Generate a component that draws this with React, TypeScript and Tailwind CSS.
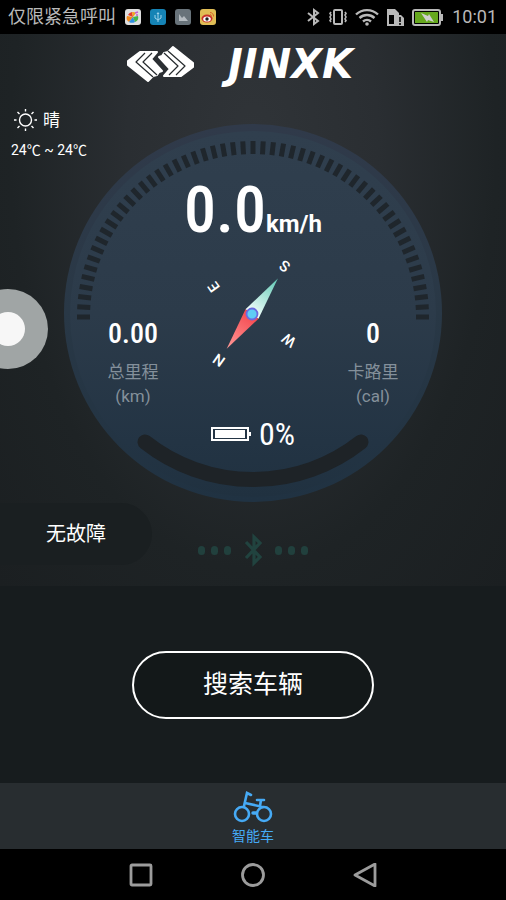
import type { ReactNode } from 'react';

const TICKS = Array.from({ length: 55 }, (_, i) => -90 + (i * 180) / 54);

function StatusBar() {
  return (
    <header className="flex h-[34px] items-center justify-between bg-black pl-2 pr-[9px] text-[#b9b9b9]">
      <div className="flex items-center gap-[9px]">
        <span className="text-lg leading-6">仅限紧急呼叫</span>
        <svg width="16" height="16" viewBox="0 0 16 16" aria-hidden="true">
          <rect width="16" height="16" rx="3" fill="#dedede" />
          <path d="M8 8 3 6a5 5 0 0 1 4-3z" fill="#e23c2e" />
          <path d="M8 8 7 3a5 5 0 0 1 4 1z" fill="#f2a51e" />
          <path d="M8 8 2 7a5 5 0 0 0 2 6z" fill="#f08a1c" />
          <path d="M8 8l-4 5a6 6 0 0 0 6 0z" fill="#2f8fe0" />
          <path d="m8 8 2 5a5 5 0 0 0 3-6z" fill="#43b649" />
          <path d="m10 4 3-1m-2 3 2 0" stroke="#c45bd0" strokeWidth="1.5" />
        </svg>
        <svg width="16" height="16" viewBox="0 0 16 16" aria-hidden="true">
          <rect width="16" height="16" rx="3" fill="#1583b5" />
          <path d="M8 13V4M5 6v3l3 2 3-2V6" fill="none" stroke="#9fd3ea" />
          <path d="m6.500 5 1.500-2 1.500 2z" fill="#9fd3ea" />
        </svg>
        <svg width="16" height="16" viewBox="0 0 16 16" aria-hidden="true">
          <rect width="16" height="16" rx="3" fill="#68737a" />
          <path d="M4 12V5l3 4 2-2 4 5z" fill="#b4bbc0" />
        </svg>
        <svg width="16" height="16" viewBox="0 0 16 16" aria-hidden="true">
          <rect width="16" height="16" rx="3" fill="#e0bd55" />
          <ellipse cx="7" cy="9.500" rx="5.500" ry="4" fill="#c8322b" />
          <ellipse cx="7" cy="10" rx="3.800" ry="2.600" fill="#fff" />
          <circle cx="7" cy="10" r="1.700" fill="#222" />
          <path d="M10 3.500a3.500 3.500 0 0 1 3.500 4M10 5.500a2 2 0 0 1 1.500 2" fill="none" stroke="#d9622b" />
        </svg>
      </div>
      <div className="flex items-center gap-2">
        <svg width="14" height="18" viewBox="0 0 14 18" fill="none" stroke="currentColor" strokeWidth="2" aria-hidden="true">
          <path d="m1 5 10 8-4 3V2l4 3-10 8" />
        </svg>
        <svg width="18" height="18" viewBox="0 0 18 18" fill="none" stroke="currentColor" strokeWidth="1.600" aria-hidden="true">
          <rect x="5" y="2" width="8" height="14" rx="1" strokeWidth="2" />
          <path d="M2 4 1 5.500 2 7 1 9l1 2-1 1.500L2 14M16 4l1 1.500L16 7l1 2-1 2 1 1.500-1 1.500" />
        </svg>
        <svg width="24" height="18" viewBox="0 0 24 18" fill="none" stroke="currentColor" strokeWidth="2.400" aria-hidden="true">
          <path d="M1 6.500a16 16 0 0 1 22 0M4.500 10a11 11 0 0 1 15 0M8 13.500a6 6 0 0 1 8 0" />
          <circle cx="12" cy="16" r="1.800" fill="currentColor" stroke="none" />
        </svg>
        <svg width="17" height="17" viewBox="0 0 17 17" aria-hidden="true">
          <path d="M0 0h8l4 4v3H8v10H0z" fill="currentColor" />
          <path d="M2 6h5v9H2z" fill="#000" />
          <path d="M8 6h6l3 3v8H8z" fill="currentColor" />
          <path d="M13 8v5M13 14v2" stroke="#000" strokeWidth="1.600" />
        </svg>
        <svg width="32" height="17" viewBox="0 0 32 17" aria-hidden="true">
          <rect x="1" y="1" width="27" height="15" rx="2" fill="none" stroke="currentColor" strokeWidth="2" />
          <rect x="3" y="3" width="23" height="11" fill="#66a81e" />
          <path d="M29 5h2v7h-2z" fill="currentColor" />
          <path d="m9 4 7 3 1-2 5 8-6-2-1 2z" fill="#d0d0d0" />
        </svg>
        <time className="text-lg leading-6">10:01</time>
      </div>
    </header>
  );
}

function Brand() {
  return (
    <div className="flex h-14 items-center justify-center gap-2 pt-1 text-white">
      <svg width="67" height="38" viewBox="0 0 67 38" strokeLinejoin="round" aria-hidden="true">
        <g fill="#fff" stroke="#fff" strokeWidth="2">
          <path d="M13 7h17l-6 7 11 12-3 1-2 3-4 1-5 5L1 20v-4z" />
          <path d="M54 31H37l6-7-11-12 3-1 2-3 4-1 5-5 20 16v4z" />
        </g>
        <g fill="none" stroke="#262b2e" strokeWidth="1.200">
          <path d="m18 8-9 9 17 15M25 8l-9 9 14 13" />
          <path d="m49 30 9-9L41 6M42 30l9-9L37 8" />
        </g>
      </svg>
      <h1 className="min-w-[178px] text-center font-['DejaVu_Sans'] text-[40px] leading-10 font-bold italic">JINXK</h1>
    </div>
  );
}

function Weather() {
  return (
    <div className="z-10 col-start-1 row-start-1 self-start justify-self-start pt-[18px] pl-[11px] text-white">
      <div className="flex items-center gap-[6px] pl-[3px] text-[17px] leading-6">
        <svg width="23" height="24" viewBox="0 0 23 24" fill="none" stroke="currentColor" strokeWidth="1.400" aria-hidden="true">
          <circle cx="11.500" cy="12" r="6" />
          <path d="M11.500 1v2.500M11.500 20.500V23M0 12h2.500M20.500 12H23M3.500 4l2 2M17.500 18l2 2M3.500 20l2-2M17.500 6l2-2" />
        </svg>
        <span>晴</span>
      </div>
      <p className="mt-[6px] text-sm leading-6">24℃ ~ 24℃</p>
    </div>
  );
}

function Stat({ value, label, unit }: { value: string; label: string; unit: string }) {
  return (
    <dl className="flex flex-col items-center pt-[67px] text-center">
      <dt className="order-2 mt-[10px] text-[17px] leading-6 text-[#84909b]">
        {label}
        <br />
        {unit}
      </dt>
      <dd className="font-['Roboto_Condensed',Roboto,sans-serif] text-[28px] leading-8 font-medium text-white">{value}</dd>
    </dl>
  );
}

function Compass() {
  return (
    <svg width="120" height="126" viewBox="-60 -63 120 126" className="justify-self-center" role="img" aria-label="Compass">
      <defs>
        <linearGradient id="south" x1="0" y1="0" x2="0" y2="1">
          <stop offset="0" stopColor="#5fc8b4" />
          <stop offset="1" stopColor="#f4fffc" />
        </linearGradient>
        <linearGradient id="north" x1="0" y1="0" x2="0" y2="1">
          <stop offset="0" stopColor="#f5484f" />
          <stop offset="1" stopColor="#ff9a98" />
        </linearGradient>
      </defs>
      <g transform="translate(-1 0) rotate(36)">
        <path d="M0-44 8 0H-8z" fill="url(#south)" />
        <path d="M-8 0H8L0 43z" fill="url(#north)" />
      </g>
      <circle cx="-1" cy="0" r="5.500" fill="#5fcdf5" stroke="#6a6be0" strokeWidth="1.800" />
      <g transform="translate(-1 0)" fill="#fff" fontSize="15" fontWeight="500" textAnchor="middle">
        <text transform="translate(-33 46) rotate(215)" y="5">N</text>
        <text transform="translate(-38 -27) rotate(235)" y="5">E</text>
        <text transform="translate(33 -48) rotate(215)" y="5">S</text>
        <text transform="translate(37 26) rotate(215)" y="5">W</text>
      </g>
    </svg>
  );
}

function Dial() {
  return (
    <div className="col-start-1 row-start-1 mt-[33px] grid w-[380px] justify-self-center">
      <svg viewBox="0 0 380 380" className="col-start-1 row-start-1 w-full" aria-hidden="true">
        <defs>
          <linearGradient id="face" x1="0" y1="0" x2="0" y2="1">
            <stop offset="0" stopColor="#303f4e" />
            <stop offset="0.500" stopColor="#2c3b4a" />
            <stop offset="0.850" stopColor="#233444" />
            <stop offset="1" stopColor="#203140" />
          </linearGradient>
          <linearGradient id="rim" x1="0" y1="0" x2="0" y2="1">
            <stop offset="0" stopColor="#303a4a" />
            <stop offset="0.500" stopColor="#293846" />
            <stop offset="1" stopColor="#203242" />
          </linearGradient>
        </defs>
        <circle cx="190" cy="190" r="189" fill="url(#rim)" />
        <circle cx="190" cy="191" r="183" fill="url(#face)" />
        {TICKS.map((angle) => (
          <rect key={angle} x="187.500" y="18" width="5" height="13" fill="#1f262c" transform={`rotate(${angle} 190 194)`} />
        ))}
        <path d="M82 319A174 174 0 0 0 298 319" fill="none" stroke="#1e2327" strokeWidth="15" strokeLinecap="round" />
      </svg>
      <div className="col-start-1 row-start-1 flex flex-col pt-14">
        <p className="flex items-baseline justify-center text-white">
          <span className="font-['Roboto_Condensed',Roboto,sans-serif] text-[64px] leading-16 font-medium">0.0</span>
          <span className="text-2xl font-bold">km/h</span>
        </p>
        <div className="mt-2 grid grid-cols-3 px-[10px]">
          <Stat value="0.00" label="总里程" unit="(km)" />
          <Compass />
          <Stat value="0" label="卡路里" unit="(cal)" />
        </div>
        <div className="mt-[10px] flex items-center justify-center gap-2 text-white">
          <svg width="40" height="14" viewBox="0 0 40 14" aria-hidden="true">
            <rect x="1" y="1" width="36" height="12" fill="none" stroke="currentColor" strokeWidth="2" />
            <rect x="4" y="3" width="30" height="8" fill="currentColor" />
            <path d="M38 5h2v4h-2z" fill="currentColor" />
          </svg>
          <span className="font-['Roboto_Condensed',Roboto,sans-serif] text-[32px] leading-8">0%</span>
        </div>
      </div>
    </div>
  );
}

function Dots() {
  return (
    <span className="flex gap-[6px]">
      <i className="h-[9px] w-[7px] rounded-full bg-[#21403d]" />
      <i className="h-[9px] w-[7px] rounded-full bg-[#21403d]" />
      <i className="h-[9px] w-[7px] rounded-full bg-[#21403d]" />
    </span>
  );
}

function LinkStatus() {
  return (
    <div className="grid h-[83px]">
      <p className="col-start-1 row-start-1 h-[62px] w-[152px] rounded-r-full bg-[#1a1f21] pl-[46px] text-xl leading-[62px] text-white">
        无故障
      </p>
      <div className="col-start-1 row-start-1 flex items-center justify-center gap-[13px] self-start justify-self-center pt-[30px]">
        <Dots />
        <svg width="18" height="34" viewBox="0 0 18 34" fill="none" stroke="#21433f" strokeWidth="3.200" aria-hidden="true">
          <path d="m2 9 14 15-6 6V4l6 6L2 25" />
        </svg>
        <Dots />
      </div>
    </div>
  );
}

function TabBar() {
  return (
    <nav className="flex h-[66px] justify-center bg-[#282d30]">
      <a href="#bike" className="flex flex-col items-center px-6 pt-[7px] text-[#46aaf5]">
        <svg width="40" height="34" viewBox="0 0 40 34" fill="none" stroke="currentColor" strokeWidth="2.600" strokeLinecap="round" aria-hidden="true">
          <circle cx="9" cy="24" r="7" />
          <circle cx="31" cy="24" r="7" />
          <path d="m11 16 3-13 4 2M12 13l18 4M24 10h7M28 10l-1 6" />
          <path d="M20 23h3" strokeWidth="3.500" />
        </svg>
        <span className="text-sm leading-6">智能车</span>
      </a>
    </nav>
  );
}

function SystemKey({ label, children }: { label: string; children: ReactNode }) {
  return (
    <button type="button" aria-label={label}>
      <svg width="24" height="24" viewBox="0 0 24 24" fill="none" stroke="#9c9c9c" strokeWidth="2.800" strokeLinejoin="round" aria-hidden="true">
        {children}
      </svg>
    </button>
  );
}

export default function App() {
  return (
    <div className="relative flex min-h-screen flex-col bg-[#171c1e] font-[Roboto,'Noto_Sans_CJK_SC',sans-serif]">
      <StatusBar />
      <main className="flex flex-1 flex-col">
        <section className="bg-[radial-gradient(ellipse_at_50%_20%,#303438_0%,#2a2e32_35%,#1e2325_68%,#1b1f21_100%)]">
          <Brand />
          <div className="grid">
            <Weather />
            <Dial />
          </div>
          <LinkStatus />
        </section>
        <section className="flex flex-1 items-center justify-center">
          <button type="button" className="h-[68px] w-[242px] rounded-full border-2 border-white bg-[#131819] text-[25px] leading-8 text-white">
            搜索车辆
          </button>
        </section>
      </main>
      <TabBar />
      <footer className="flex h-[51px] items-center justify-center gap-[88px] bg-black">
        <SystemKey label="Recent apps">
          <rect x="2" y="2" width="20" height="20" rx="1" />
        </SystemKey>
        <SystemKey label="Home">
          <circle cx="12" cy="12" r="10.500" />
        </SystemKey>
        <SystemKey label="Back">
          <path d="M2 12 22 1v22z" />
        </SystemKey>
      </footer>
      <button
        type="button"
        aria-label="Assistive touch"
        className="absolute top-[289px] -left-8 flex size-20 items-center justify-center rounded-full bg-[#a0a5a5]"
      >
        <span className="size-[34px] rounded-full bg-[#f7f7f7]" />
      </button>
    </div>
  );
}
